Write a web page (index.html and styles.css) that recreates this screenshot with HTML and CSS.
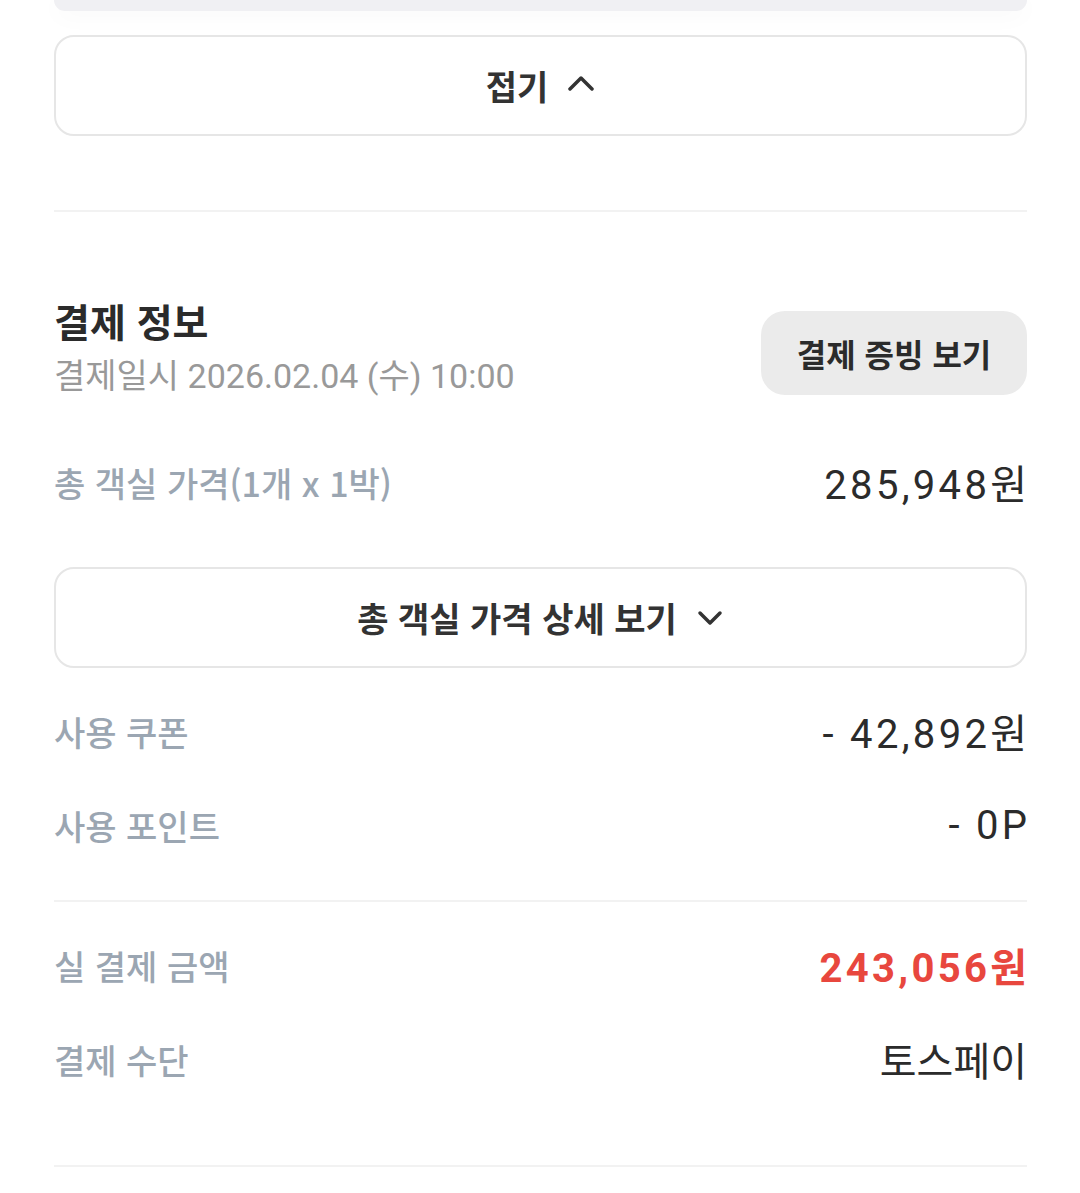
FILE: index.html
```html
<!DOCTYPE html>
<html lang="ko">
<head>
    <meta charset="UTF-8">
    <meta name="viewport" content="width=device-width, initial-scale=1.0">
    <title>결제 정보</title>
    <link rel="stylesheet" href="styles.css">
</head>
<body>

<div class="page">
    <div class="prev-card"></div>

    <button class="outline-btn fold-btn">
        접기
        <svg class="chevron" width="28" height="16" viewBox="0 0 28 16">
            <path d="M3 14 L14 3 L25 14" fill="none" stroke="#333" stroke-width="3.5" stroke-linecap="round" stroke-linejoin="round"/>
        </svg>
    </button>

    <div class="divider divider-top"></div>

    <!-- 결제 정보 -->
    <div class="pay-head">
        <div class="pay-title">
            <h2>결제 정보</h2>
            <p class="pay-date">결제일시 2026.02.04 (수) 10:00</p>
        </div>
        <button class="receipt-btn">결제 증빙 보기</button>
    </div>

    <div class="info-row row-first">
        <span class="label">총 객실 가격(1개 x 1박)</span>
        <span class="value num">285,948원</span>
    </div>

    <button class="outline-btn detail-btn">
        총 객실 가격 상세 보기
        <svg class="chevron" width="28" height="16" viewBox="0 0 28 16">
            <path d="M4 3 L14 13 L24 3" fill="none" stroke="#333" stroke-width="3.5" stroke-linecap="round" stroke-linejoin="round"/>
        </svg>
    </button>

    <div class="info-row row-coupon">
        <span class="label">사용 쿠폰</span>
        <span class="value num">- 42,892원</span>
    </div>
    <div class="info-row">
        <span class="label">사용 포인트</span>
        <span class="value num">- 0P</span>
    </div>

    <div class="divider divider-mid"></div>

    <div class="info-row row-total">
        <span class="label">실 결제 금액</span>
        <span class="value num total">243,056원</span>
    </div>
    <div class="info-row">
        <span class="label">결제 수단</span>
        <span class="value">토스페이</span>
    </div>

    <div class="divider divider-bottom"></div>
</div>

</body>
</html>
```

FILE: styles.css
```css
body {
    margin: 0;
    background: #fff;
    font-family: Roboto, "Noto Sans CJK KR", sans-serif;
    color: #333;
}
.page {
    padding: 0 53px 0 54px;
}
.prev-card {
    height: 11px;
    background-color: #f0f0f3;
    border-radius: 0 0 20px 20px;
    box-shadow: 0 4px 24px rgba(0, 0, 0, 0.04);
}
.outline-btn {
    width: 100%;
    height: 101px;
    display: flex;
    align-items: center;
    justify-content: center;
    gap: 19px;
    background: #fff;
    border: 2px solid #e6e6e6;
    border-radius: 20px;
    font-family: "Noto Sans CJK KR", sans-serif;
    font-size: 34px;
    font-weight: 700;
    color: #333;
    padding: 0;
}
.fold-btn {
    margin-top: 24px;
}
.fold-btn .chevron {
    margin-top: -6px;
}
.divider {
    height: 2px;
    background-color: #f2f2f2;
}
.divider-top {
    margin-top: 74px;
}
.divider-mid {
    margin-top: 28px;
}
.divider-bottom {
    margin-top: 59px;
}
.pay-head {
    display: flex;
    justify-content: space-between;
    align-items: flex-start;
    margin-top: 83px;
}
.pay-title h2 {
    margin: 0;
    font-family: "Noto Sans CJK KR", sans-serif;
    font-size: 39px;
    font-weight: 700;
    line-height: 50px;
    color: #2b2b2b;
}
.pay-date {
    margin: 8px 0 0;
    font-size: 34px;
    line-height: 46px;
    color: #999;
}
.receipt-btn {
    margin-top: 16px;
    width: 266px;
    height: 84px;
    border: none;
    border-radius: 24px;
    background-color: #ebebeb;
    font-family: "Noto Sans CJK KR", sans-serif;
    font-size: 32px;
    font-weight: 700;
    color: #2b2b2b;
    padding: 0;
}
.info-row {
    height: 94px;
    display: flex;
    justify-content: space-between;
    align-items: center;
}
.row-first {
    margin-top: 36px;
    margin-bottom: 38px;
}
.row-coupon {
    margin-top: 16px;
}
.row-total {
    margin-top: 16px;
}
.label {
    font-family: "Noto Sans CJK KR", sans-serif;
    font-size: 34px;
    font-weight: 500;
    color: #9ba6b2;
}
.value {
    font-size: 40px;
    color: #2b2b2b;
}
.value.num {
    letter-spacing: 3.3px;
    margin-right: -3.3px;
}
.value.total {
    color: #e8473e;
    font-weight: 700;
}
```
